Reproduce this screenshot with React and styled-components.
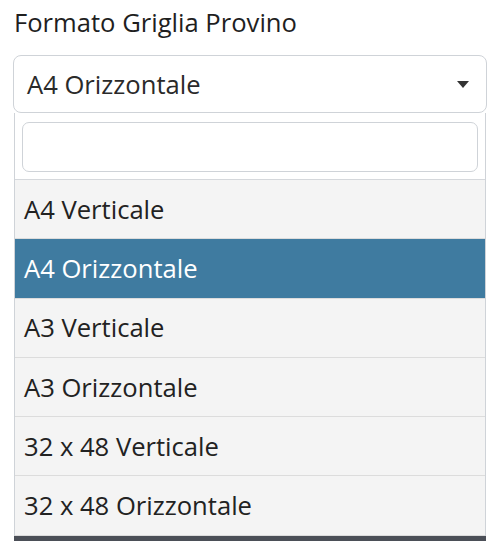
import React from "react";
import styled, { createGlobalStyle } from "styled-components";

const GlobalStyle = createGlobalStyle`
  html, body {
    margin: 0;
    padding: 0;
    background: #ffffff;
    overflow: hidden;
  }
  body {
    font-family: "Open Sans", "Noto Sans", sans-serif;
    color: #222;
  }
`;

const options = [
  "A4 Verticale",
  "A4 Orizzontale",
  "A3 Verticale",
  "A3 Orizzontale",
  "32 x 48 Verticale",
  "32 x 48 Orizzontale",
];

const selected = "A4 Orizzontale";

const App = () => {
  return (
    <>
      <GlobalStyle />
      <StWrap>
        <StLabel>Formato Griglia Provino</StLabel>
        <StSelect>
          <span>{selected}</span>
          <StArrow />
        </StSelect>
        <StDropdown>
          <StSearchArea>
            <StSearch type="text" />
          </StSearchArea>
          <StList>
            {options.map((opt) => (
              <StOption key={opt} $active={opt === selected}>
                {opt}
              </StOption>
            ))}
          </StList>
        </StDropdown>
        <StFooterBar />
      </StWrap>
    </>
  );
};

export default App;

const StWrap = styled.div`
  display: flex;
  flex-direction: column;
  padding: 6px 8px 0 13px;
  & > * {
    flex-shrink: 0;
  }
`;

const StLabel = styled.label`
  font-size: 25.6px;
  line-height: 34px;
  padding-left: 1px;
  margin-bottom: 15px;
  color: #1f1f1f;
`;

const StSelect = styled.div`
  display: flex;
  align-items: center;
  justify-content: space-between;
  height: 58px;
  box-sizing: border-box;
  border: 1px solid #cfd3d8;
  border-radius: 8px;
  padding: 0 17px 0 13px;
  font-size: 25.6px;
  color: #2a2a2a;
`;

const StArrow = styled.span`
  width: 0;
  height: 0;
  border-left: 6px solid transparent;
  border-right: 6px solid transparent;
  border-top: 7px solid #333;
  margin-top: 1px;
`;

const StDropdown = styled.div`
  margin: 0 1px;
  border-left: 1px solid #cfd3d8;
  border-right: 1px solid #cfd3d8;
  display: flex;
  flex-direction: column;
`;

const StSearchArea = styled.div`
  background: #fff;
  padding: 9px 7px 7px 7px;
  border-bottom: 1px solid #d5d8dc;
`;

const StSearch = styled.input`
  display: block;
  width: 100%;
  height: 50px;
  box-sizing: border-box;
  border: 1px solid #cfd3d8;
  border-radius: 7px;
  outline: none;
  font-size: 24px;
`;

const StList = styled.ul`
  list-style: none;
  margin: 0;
  padding: 0;
  background: #f4f4f4;
`;

const StOption = styled.li`
  height: 59.3px;
  box-sizing: border-box;
  display: flex;
  align-items: center;
  padding-left: 9px;
  font-size: 25.6px;
  border-bottom: 1px solid #dcdcdc;
  background: ${(p) => (p.$active ? "#3f7ba0" : "transparent")};
  color: ${(p) => (p.$active ? "#ffffff" : "#222")};
`;

const StFooterBar = styled.div`
  height: 12px;
  margin: 0 1px;
  background: #4b4f57;
`;
